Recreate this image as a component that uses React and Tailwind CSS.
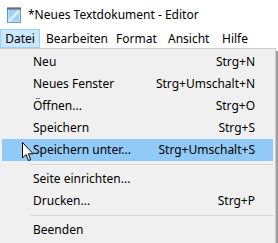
import React from 'react';

const items = [
  { label: 'Neu', shortcut: 'Strg+N' },
  { label: 'Neues Fenster', shortcut: 'Strg+Umschalt+N' },
  { label: 'Öffnen...', shortcut: 'Strg+O' },
  { label: 'Speichern', shortcut: 'Strg+S' },
  { label: 'Speichern unter...', shortcut: 'Strg+Umschalt+S', active: true },
  { sep: true },
  { label: 'Seite einrichten...' },
  { label: 'Drucken...', shortcut: 'Strg+P' },
  { sep: true },
  { label: 'Beenden' },
];

function NotepadIcon() {
  return (
    <svg width="16" height="17" viewBox="0 0 16 17">
      <rect x="1.5" y="2.5" width="13" height="14" fill="#bfe3f5" stroke="#6a9ab8" />
      <rect x="3" y="4" width="10" height="11" fill="#9fd2ee" />
      <path d="M2 1v3M4 1v3M6 1v3M8 1v3M10 1v3M12 1v3M14 1v3" stroke="#4a4a4a" />
      <path d="M3 15 L13 5" stroke="#d6eefa" strokeWidth="3" />
    </svg>
  );
}

function Cursor() {
  return (
    <svg width="13" height="20" viewBox="0 0 13 20" className="absolute left-[20px] top-[3px]">
      <path
        d="M0.5 0.5 L0.5 16 L4 12.5 L6.5 18.5 L8.7 17.6 L6.3 11.8 L11.2 11.8 Z"
        fill="#fff"
        stroke="#000"
        strokeWidth="1"
        strokeLinejoin="miter"
      />
    </svg>
  );
}

export default function App() {
  return (
    <div className="w-[278px] h-[243px] overflow-hidden bg-white text-black text-[12px] font-['Noto_Sans',sans-serif] leading-none">
      {/* Title bar */}
      <div className="h-[29px] flex items-center pl-[6px] gap-[6px]">
        <NotepadIcon />
        <span className="text-[12px]">*Neues Textdokument - Editor</span>
      </div>

      {/* Menu bar */}
      <div className="h-[19px] flex items-stretch">
        <div className="w-[40px] bg-[#cce8ff] border border-[#99d1ff] flex items-center justify-center">Datei</div>
        <div className="flex items-center pl-[6px] whitespace-nowrap">
          <span className="w-[70px]">Bearbeiten</span>
          <span className="w-[52px]">Format</span>
          <span className="w-[54px]">Ansicht</span>
          <span>Hilfe</span>
        </div>
      </div>

      {/* Dropdown */}
      <div className="flex">
        <div className="w-[276px] h-[200px] bg-[#f0f0f0] border-t border-r border-[#cccccc] pt-[2px] pl-[2px] pr-[2px]">
          {items.map((it, i) =>
            it.sep ? (
              <div key={i} className="h-[7px] flex items-center pl-[28px]">
                <div className="h-px w-full bg-[#d7d7d7]" />
              </div>
            ) : (
              <div
                key={i}
                className={`relative h-[22px] flex items-center pl-[31px] pr-[18px] ${it.active ? 'bg-[#91c9f7]' : ''}`}
              >
                <span className="flex-1">{it.label}</span>
                {it.shortcut && <span>{it.shortcut}</span>}
                {it.active && <Cursor />}
              </div>
            )
          )}
        </div>
        <div className="w-[2px] h-[200px] bg-[#a0a0a0] mt-[3px]" />
      </div>
    </div>
  );
}
